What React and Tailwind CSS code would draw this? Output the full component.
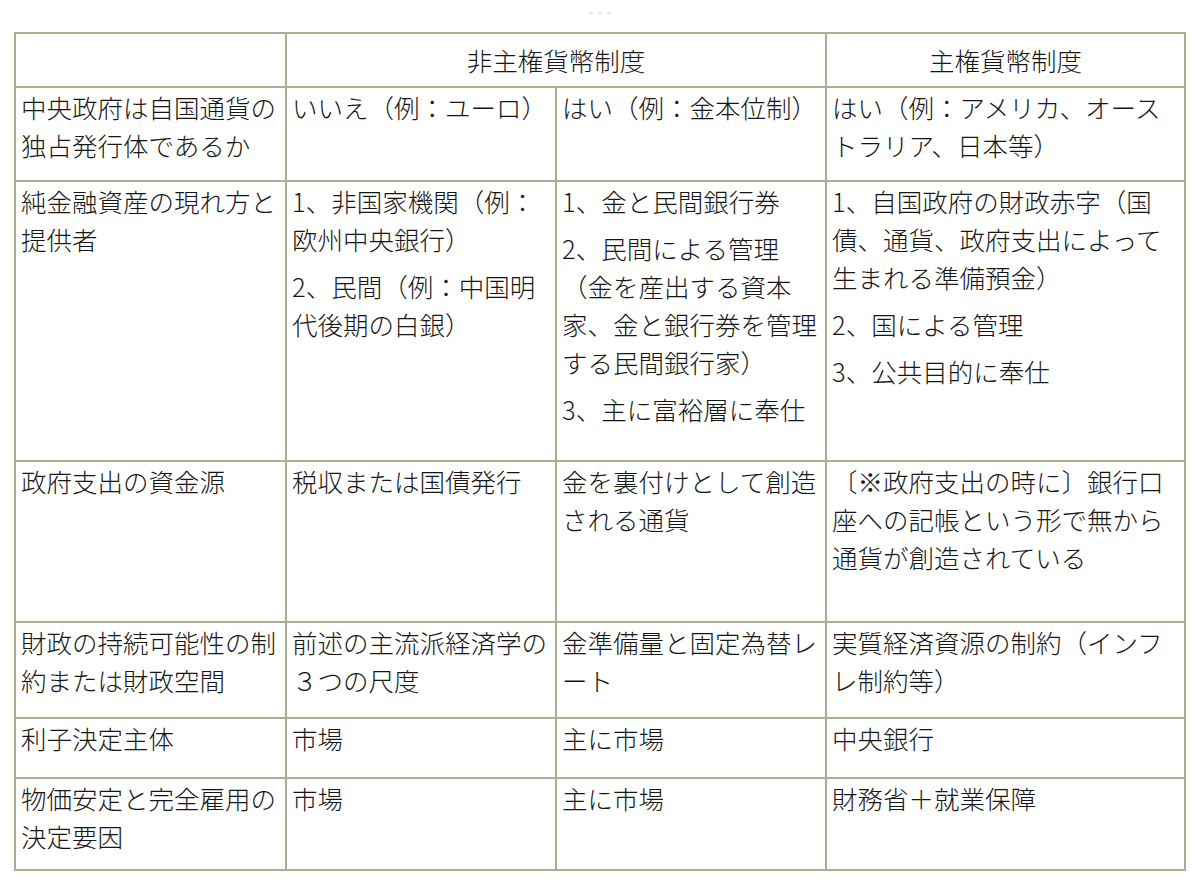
const rows = [
    {
        h: "h-[94px]",
        cells: [
            [["中央政府は自国通貨の", "独占発行体であるか"]],
            [["いいえ（例：ユーロ）"]],
            [["はい（例：金本位制）"]],
            [["はい（例：アメリカ、オース", "トラリア、日本等）"]]
        ]
    },
    {
        h: "h-[280px]",
        cells: [
            [["純金融資産の現れ方と", "提供者"]],
            [["1、非国家機関（例：", "欧州中央銀行）"], ["2、民間（例：中国明", "代後期の白銀）"]],
            [["1、金と民間銀行券"], ["2、民間による管理", "（金を産出する資本", "家、金と銀行券を管理", "する民間銀行家）"], ["3、主に富裕層に奉仕"]],
            [["1、自国政府の財政赤字（国", "債、通貨、政府支出によって", "生まれる準備預金）"], ["2、国による管理"], ["3、公共目的に奉仕"]]
        ]
    },
    {
        h: "h-[161px]",
        cells: [
            [["政府支出の資金源"]],
            [["税収または国債発行"]],
            [["金を裏付けとして創造", "される通貨"]],
            [["〔※政府支出の時に〕銀行口", "座への記帳という形で無から", "通貨が創造されている"]]
        ]
    },
    {
        h: "h-[96px]",
        cells: [
            [["財政の持続可能性の制", "約または財政空間"]],
            [["前述の主流派経済学の", "３つの尺度"]],
            [["金準備量と固定為替レ", "ート"]],
            [["実質経済資源の制約（インフ", "レ制約等）"]]
        ]
    },
    {
        h: "h-[60px]",
        cells: [
            [["利子決定主体"]],
            [["市場"]],
            [["主に市場"]],
            [["中央銀行"]]
        ]
    },
    {
        h: "h-[92px]",
        cells: [
            [["物価安定と完全雇用の", "決定要因"]],
            [["市場"]],
            [["主に市場"]],
            [["財務省＋就業保障"]]
        ]
    }
]

function Cell({ paras }) {
    return (
        <td className="border-2 border-[#adad93] align-top pl-[5px] pr-1 pt-0">
            {paras.map((lines, i) => (
                <div key={i} className={i < paras.length - 1 ? "mb-[9px]" : ""}>
                    {lines.map((l, j) => (
                        <div key={j} className="whitespace-nowrap">{l}</div>
                    ))}
                </div>
            ))}
        </td>
    )
}

export default function App() {
    return (
        <div className="w-[1200px] h-[888px] bg-white overflow-hidden text-[#161616] text-[25.5px] leading-[38px] font-light"
            style={{ fontFamily: '"Noto Sans CJK JP", "Noto Sans CJK SC", sans-serif' }}>
            <div className="flex justify-center gap-[5px] pt-[11px] h-[32px]">
                <div className="w-[4px] h-[4px] rounded-full bg-[#ececec]"></div>
                <div className="w-[4px] h-[4px] rounded-full bg-[#ececec]"></div>
                <div className="w-[4px] h-[4px] rounded-full bg-[#ececec]"></div>
            </div>
            <table className="ml-[14px] w-[1170px] table-fixed border-collapse">
                <colgroup>
                    <col className="w-[271px]" />
                    <col className="w-[270px]" />
                    <col className="w-[270px]" />
                    <col className="w-[359px]" />
                </colgroup>
                <tbody>
                    <tr className="h-[54px]">
                        <td className="border-2 border-[#adad93]"></td>
                        <td colSpan={2} className="border-2 border-[#adad93] text-center align-middle">非主権貨幣制度</td>
                        <td className="border-2 border-[#adad93] text-center align-middle">主権貨幣制度</td>
                    </tr>
                    {rows.map((r, i) => (
                        <tr key={i} className={r.h}>
                            {r.cells.map((c, j) => <Cell key={j} paras={c} />)}
                        </tr>
                    ))}
                </tbody>
            </table>
        </div>
    )
}
